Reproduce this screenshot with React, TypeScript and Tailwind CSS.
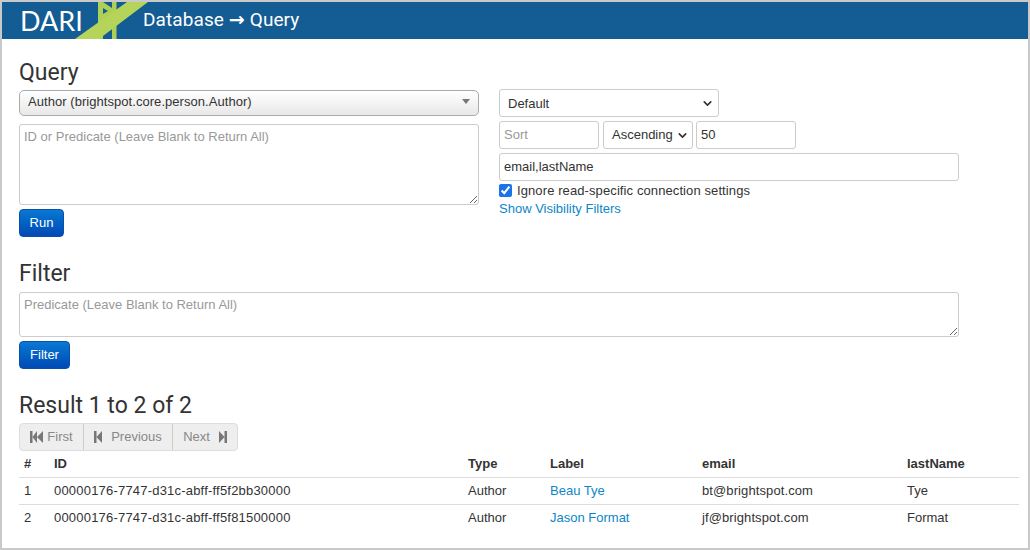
import { ChevronDown } from "lucide-react";

const rows = [
  { n: 1, id: "00000176-7747-d31c-abff-ff5f2bb30000", label: "Beau Tye", email: "bt@brightspot.com", last: "Tye" },
  { n: 2, id: "00000176-7747-d31c-abff-ff5f81500000", label: "Jason Format", email: "jf@brightspot.com", last: "Format" },
];

function Logo() {
  return (
    <svg width="75" height="37" viewBox="0 0 75 37" className="shrink-0">
      <path d="M23 0h5v37h-5zM37 0h4.500v37H37z" fill="#adD055" />
      <path d="M28 0l9 6v6l-9 6v-6l5-3-5-3z" fill="#adD055" />
      <path d="M0 37L52 0h21L24 37z" fill="#b5d55a" />
    </svg>
  );
}

function SkipIcon({ dir, double }: { dir: "left" | "right"; double?: boolean }) {
  return (
    <svg width={double ? 13 : 10} height="12" viewBox={double ? "0 0 13 12" : "0 0 10 12"} fill="#777">
      {dir === "left" ? (
        double ? (
          <path d="M0 0h2.500v12H0zM7 0v12L2.500 6zM13 0v12L7 6z" />
        ) : (
          <path d="M0 0h2.500v12H0zM8 0v12L2.500 6z" />
        )
      ) : (
        <path d="M7.500 0H10v12H7.500zM2 0v12l5.500-6z" />
      )}
    </svg>
  );
}

export default function App() {
  return (
    <div className="h-[550px] w-[1030px] overflow-hidden border-2 border-[#c9c9c9] bg-white font-['Liberation_Sans',sans-serif] text-[13px] text-[#333]">
      <header className="flex h-[37px] items-center overflow-hidden bg-[#135c94] pl-[18px] text-white">
        <span className="w-[55px] font-['Lato',sans-serif] text-[27px] leading-none">DARI</span>
        <Logo />
        <span className="ml-[-7px] pb-[2px] font-['Roboto',sans-serif] text-[19px] tracking-[0.1px]">
          Database <span className="font-['DejaVu_Sans',sans-serif] font-bold">→</span> Query
        </span>
      </header>

      <main className="pl-[17px] pr-[9px]">
        <h2 className="mt-[21px] font-['Roboto',sans-serif] text-[23px] leading-[26px] text-[#333]">Query</h2>
        <div className="mt-[4px] flex gap-5">
          <div className="w-[460px]">
            <div className="flex h-[26px] items-center justify-between rounded-[5px] border border-[#aaa] bg-gradient-to-b from-white to-[#e8e8e8] px-[8px] pb-[3px]">
              <span className="tracking-[0.05px]">Author (brightspot.core.person.Author)</span>
              <span className="h-0 w-0 border-x-[4px] border-t-[5px] border-x-transparent border-t-[#777]" />
            </div>
            <textarea
              className="mt-[8px] block h-[81px] w-full rounded-[3px] border border-[#ccc] px-[4px] py-[2px] text-[13px] outline-none placeholder:text-[#999]"
              placeholder="ID or Predicate (Leave Blank to Return All)"
            />
            <button className="mt-[4px] block h-[28px] w-[45px] rounded-[4px] border border-[#0a4fa8] bg-gradient-to-b from-[#0b78d4] to-[#0349b4] text-[13px] text-white">
              Run
            </button>
          </div>
          <div className="mt-[-1px] w-[460px]">
            <div className="flex h-[28px] w-[220px] items-center justify-between rounded-[3px] border border-[#ccc] pl-[8px] pr-[4px] pt-[1px]">
              <span>Default</span>
              <ChevronDown size={13} strokeWidth={3} className="text-[#333]" />
            </div>
            <div className="mt-[4px] flex gap-[4px]">
              <input
                className="h-[28px] w-[100px] rounded-[3px] border border-[#ccc] px-[4px] pb-[2px] text-[13px] outline-none placeholder:text-[#999]"
                placeholder="Sort"
              />
              <div className="flex h-[28px] w-[90px] items-center justify-between rounded-[3px] border border-[#ccc] pl-[8px] pr-[3px]">
                <span>Ascending</span>
                <ChevronDown size={13} strokeWidth={3} className="text-[#333]" />
              </div>
              <input
                className="ml-[-1px] h-[28px] w-[100px] rounded-[3px] border border-[#ccc] px-[4px] pb-[2px] text-[13px] outline-none"
                defaultValue="50"
              />
            </div>
            <input
              className="mt-[4px] block h-[28px] w-full rounded-[3px] border border-[#ccc] px-[4px] pb-[2px] text-[13px] outline-none"
              defaultValue="email,lastName"
            />
            <label className="mt-[2px] flex h-[15px] items-center gap-[5px]">
              <input type="checkbox" defaultChecked className="m-0 h-[13px] w-[13px] accent-[#1a73e8]" />
              <span className="tracking-[0.1px]">Ignore read-specific connection settings</span>
            </label>
            <a className="mt-[3px] block leading-[15px] text-[#0d86c8]">Show Visibility Filters</a>
          </div>
        </div>

        <h2 className="mt-[24px] font-['Roboto',sans-serif] text-[23px] leading-[26px]">Filter</h2>
        <textarea
          className="mt-[5px] block h-[45px] w-[940px] rounded-[3px] border border-[#ccc] px-[4px] py-[2px] text-[13px] outline-none placeholder:text-[#999]"
          placeholder="Predicate (Leave Blank to Return All)"
        />
        <button className="mt-[4px] block h-[28px] w-[51px] rounded-[4px] border border-[#0a4fa8] bg-gradient-to-b from-[#0b78d4] to-[#0349b4] text-[13px] text-white">
          Filter
        </button>

        <h2 className="mt-[24px] font-['Roboto',sans-serif] text-[23px] leading-[26px]">Result 1 to 2 of 2</h2>
        <div className="mt-[4px] flex h-[28px] w-[219px] rounded-[4px] border border-[#ddd] bg-[#eee] text-[#888]">
          <span className="flex w-[64px] items-center justify-center gap-[4px] border-r border-[#ccc]">
            <SkipIcon dir="left" double />
            First
          </span>
          <span className="flex w-[89px] items-center justify-center gap-[7px] border-r border-[#ccc]">
            <SkipIcon dir="left" />
            Previous
          </span>
          <span className="flex flex-1 items-center justify-center gap-[7px]">
            Next
            <SkipIcon dir="right" />
          </span>
        </div>
        <table className="w-[1000px] table-fixed border-collapse text-left">
          <thead>
            <tr className="h-[26px] border-b border-[#ddd] font-bold">
              <th className="w-[35px] pl-[5px]">#</th>
              <th className="w-[414px]">ID</th>
              <th className="w-[82px]">Type</th>
              <th className="w-[152px]">Label</th>
              <th className="w-[205px]">email</th>
              <th>lastName</th>
            </tr>
          </thead>
          <tbody>
            {rows.map((r, i) => (
              <tr key={r.n} className={i === 0 ? "h-[27px] border-b border-[#ddd]" : "h-[27px]"}>
                <td className="pl-[5px]">{r.n}</td>
                <td className="tracking-[0.2px]">{r.id}</td>
                <td>Author</td>
                <td className="text-[#0d86c8]">{r.label}</td>
                <td className="tracking-[0.1px]">{r.email}</td>
                <td>{r.last}</td>
              </tr>
            ))}
          </tbody>
        </table>
      </main>
    </div>
  );
}
